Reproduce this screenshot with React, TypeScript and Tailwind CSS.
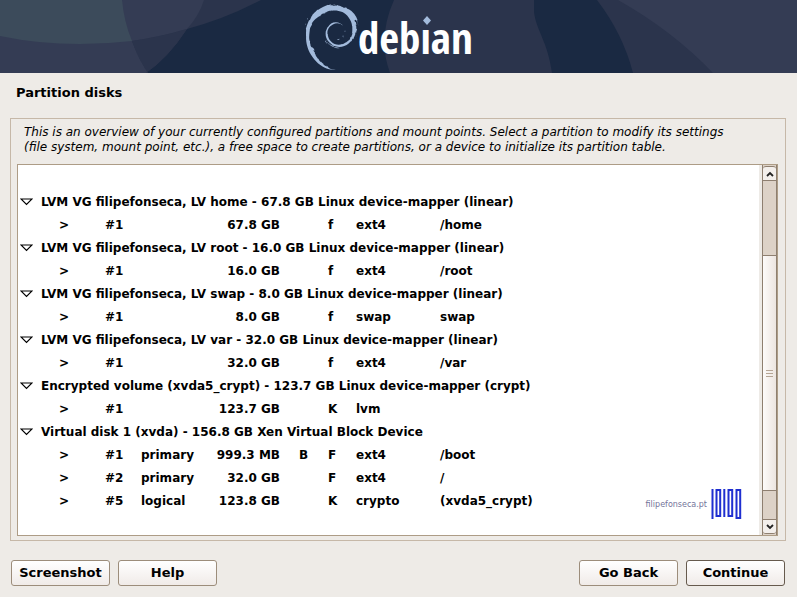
import { SiDebian } from 'react-icons/si';

type Partition = {
  number: string;
  type?: string;
  size: string;
  boot?: string;
  use: string;
  fs: string;
  mount?: string;
};

type Device = { name: string; partitions: Partition[] };

const devices: Device[] = [
  {
    name: 'LVM VG filipefonseca, LV home - 67.8 GB Linux device-mapper (linear)',
    partitions: [{ number: '#1', size: '67.8 GB', use: 'f', fs: 'ext4', mount: '/home' }],
  },
  {
    name: 'LVM VG filipefonseca, LV root - 16.0 GB Linux device-mapper (linear)',
    partitions: [{ number: '#1', size: '16.0 GB', use: 'f', fs: 'ext4', mount: '/root' }],
  },
  {
    name: 'LVM VG filipefonseca, LV swap - 8.0 GB Linux device-mapper (linear)',
    partitions: [{ number: '#1', size: '8.0 GB', use: 'f', fs: 'swap', mount: 'swap' }],
  },
  {
    name: 'LVM VG filipefonseca, LV var - 32.0 GB Linux device-mapper (linear)',
    partitions: [{ number: '#1', size: '32.0 GB', use: 'f', fs: 'ext4', mount: '/var' }],
  },
  {
    name: 'Encrypted volume (xvda5_crypt) - 123.7 GB Linux device-mapper (crypt)',
    partitions: [{ number: '#1', size: '123.7 GB', use: 'K', fs: 'lvm' }],
  },
  {
    name: 'Virtual disk 1 (xvda) - 156.8 GB Xen Virtual Block Device',
    partitions: [
      { number: '#1', type: 'primary', size: '999.3 MB', boot: 'B', use: 'F', fs: 'ext4', mount: '/boot' },
      { number: '#2', type: 'primary', size: '32.0 GB', use: 'F', fs: 'ext4', mount: '/' },
      { number: '#5', type: 'logical', size: '123.8 GB', use: 'K', fs: 'crypto', mount: '(xvda5_crypt)' },
    ],
  },
];

function Banner() {
  return (
    <header className="relative h-[73px] overflow-hidden bg-[#1a2942]">
      <svg className="h-full w-full" viewBox="0 0 797 73" preserveAspectRatio="xMidYMid slice" aria-hidden="true">
        <path d="M0 0H261Q225 19 187 29Q168 58 146 73H0Z" fill="#2b344c" />
        <path d="M0 0H204Q199 16 187 29Q160 37 132 41Q138 58 148 73H0Z" fill="#343c54" />
        <path d="M0 0H122Q124 22 132 41Q62 49 0 36Z" fill="#3c4b5b" />
        <path d="M146 73Q168 58 187 29Q160 37 132 41Q138 58 148 73Z" fill="#2b344c" />
        <path d="M394 0H534V12C536 30 548 42 552 73H390Q377 38 394 0Z" fill="#2b344c" />
        <path d="M597 0H797V73H633Q623 34 597 0Z" fill="#2b344c" />
        <path d="M618 0H797V73H713Q673 31 618 0Z" fill="#343c54" />
      </svg>
      <div className="absolute inset-0 flex justify-center">
        <div className="flex w-[200px] items-center">
          <SiDebian className="size-[66px] shrink-0 text-[#a3bbdc]" aria-hidden="true" />
          <svg className="h-[73px] w-[134px] shrink-0 overflow-visible" viewBox="0 0 134 73" role="img" aria-label="debian">
            <text
              x="-7"
              y="54"
              fontFamily="'Open Sans Condensed', 'Roboto Condensed', 'Lato', sans-serif"
              fontSize="43"
              fontWeight="700"
              fill="#ffffff"
            >
              debian
            </text>
            {/* diamond in place of the dot of the i */}
            <path d="M57 17H67V28H57Z" fill="#2b344c" />
            <path d="M62 16L66 20.5L62 25L58 20.5Z" fill="#a3bbdc" />
          </svg>
        </div>
      </div>
    </header>
  );
}

function DeviceRows({ device }: { device: Device }) {
  return (
    <tbody>
      <tr className="h-[23px]">
        <td className="pb-0.5 pl-[2px]">
          <button type="button" className="block" aria-label="Collapse">
            <svg className="h-2 w-[13px]" viewBox="0 0 13 8" fill="none" stroke="#000" strokeWidth="1.2" aria-hidden="true">
              <path d="M1 1H12L6.5 6.5Z" />
            </svg>
          </button>
        </td>
        <th colSpan={8} scope="rowgroup" className="text-left">
          {device.name}
        </th>
      </tr>
      {device.partitions.map((p) => (
        <tr key={p.number} className="h-[23px]">
          <td />
          <td className="pl-[18px]">&gt;</td>
          <td>{p.number}</td>
          <td>{p.type}</td>
          <td className="text-right">{p.size}</td>
          <td className="pl-[19px]">{p.boot}</td>
          <td>{p.use}</td>
          <td>{p.fs}</td>
          <td>{p.mount}</td>
        </tr>
      ))}
    </tbody>
  );
}

function Scrollbar() {
  return (
    <div className="flex w-[18px] shrink-0 bg-[#eeebe7] pl-[3px]">
      <div className="flex w-full flex-col border-x border-[#8e7f70] bg-[#ddd2c7]">
        <button type="button" aria-label="Scroll up" className="mt-px flex h-[15px] items-center justify-center rounded-t-[3px] border-y border-[#8e7f70] bg-[#f3efec]">
          <svg className="h-2 w-2" viewBox="0 0 8 8" fill="none" stroke="#222" strokeWidth="1.8" aria-hidden="true">
            <path d="M1 6L4 3L7 6" />
          </svg>
        </button>
        <div className="flex-1" />
        <div className="flex h-[236px] items-center justify-center border-y border-[#8e7f70] bg-linear-to-r from-[#fdfbfa] to-[#ece5e0]">
          <div className="flex w-[7px] flex-col gap-[2px]">
            <span className="h-px bg-[#b5a595]" />
            <span className="h-px bg-[#b5a595]" />
            <span className="h-px bg-[#b5a595]" />
          </div>
        </div>
        <div className="h-[28px]" />
        <button type="button" aria-label="Scroll down" className="mb-px flex h-[15px] items-center justify-center rounded-b-[3px] border-y border-[#8e7f70] bg-[#f3efec]">
          <svg className="h-2 w-2" viewBox="0 0 8 8" fill="none" stroke="#222" strokeWidth="1.8" aria-hidden="true">
            <path d="M1 2L4 5L7 2" />
          </svg>
        </button>
      </div>
    </div>
  );
}

const buttonClass =
  'h-[26px] w-[99px] rounded-[3px] border bg-linear-to-b from-white to-[#f0ebe8] text-[13px] font-bold';

export default function App() {
  return (
    <div className="flex min-h-screen flex-col bg-[#eeebe7] font-['DejaVu_Sans',sans-serif] text-[13px] text-black">
      <Banner />
      <main className="flex flex-1 flex-col px-[10px] pb-3">
        <h1 className="px-[6px] py-3 text-[13px] leading-4 font-bold">Partition disks</h1>
        <section className="mt-[5px] mr-px flex flex-1 flex-col border border-[#c6b8a8] px-[6px] pt-[6px] pb-1">
          <p className="px-[7px] text-[12px] leading-[15px] italic">
            This is an overview of your currently configured partitions and mount points. Select a partition to modify its settings
            <br />
            (file system, mount point, etc.), a free space to create partitions, or a device to initialize its partition table.
          </p>
          <div className="relative mt-[9px] mr-px flex flex-1 border border-[#ad9c86] bg-white">
            <div className="flex-1 pt-[26px] pb-[22px]">
              <table className="w-full table-fixed text-[12px] leading-[23px] font-bold">
                <colgroup>
                  <col className="w-[23px]" />
                  <col className="w-[64px]" />
                  <col className="w-[36px]" />
                  <col className="w-[60px]" />
                  <col className="w-[79px]" />
                  <col className="w-[48px]" />
                  <col className="w-[28px]" />
                  <col className="w-[84px]" />
                  <col />
                </colgroup>
                {devices.map((device) => (
                  <DeviceRows key={device.name} device={device} />
                ))}
              </table>
            </div>
            <Scrollbar />
            <div className="absolute right-[34px] bottom-[15px] flex items-center gap-1">
              <span className="text-[8px] text-[#74749a]">filipefonseca.pt</span>
              <svg className="h-[31px] w-8" viewBox="0 0 32 31" fill="none" stroke="#1f2fd0" strokeWidth="2" aria-hidden="true">
                <path d="M1.5 0V30M13.3 0V28M5.5 1H9.2V27H5.5ZM17.5 1H21.2V27H17.5ZM25.5 1H29.2V29H25.5Z" />
              </svg>
            </div>
          </div>
        </section>
        <footer className="mt-[19px] flex justify-between pr-[2px] pl-px">
          <div className="flex gap-2">
            <button type="button" className={`${buttonClass} border-[#9c8d7b]`}>Screenshot</button>
            <button type="button" className={`${buttonClass} border-[#9c8d7b]`}>Help</button>
          </div>
          <div className="flex gap-2">
            <button type="button" className={`${buttonClass} border-[#9c8d7b]`}>Go Back</button>
            <button type="button" className={`${buttonClass} border-[#665a4d]`}>Continue</button>
          </div>
        </footer>
      </main>
    </div>
  );
}
